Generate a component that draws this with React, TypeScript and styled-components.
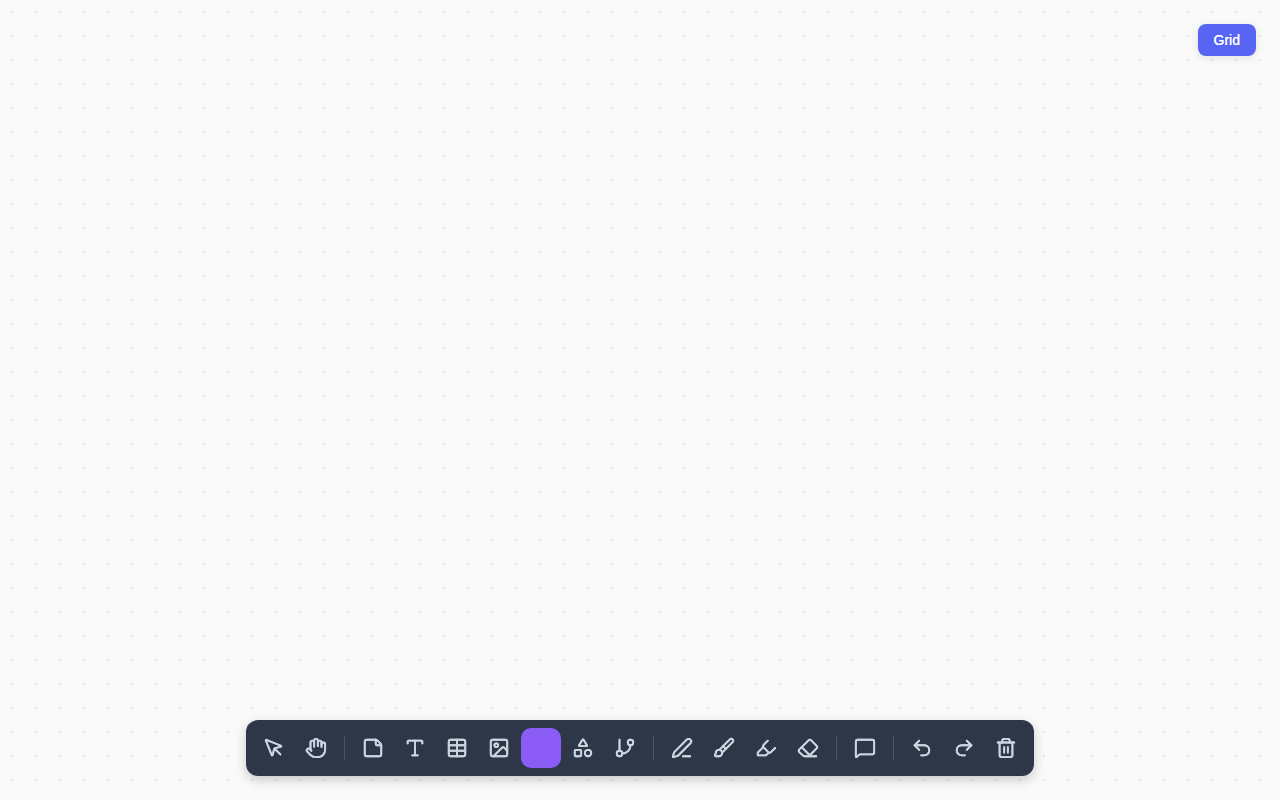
import React from 'react';
import styled, { createGlobalStyle } from 'styled-components';
import {
  Brush,
  Eraser,
  GitBranch,
  Hand,
  Highlighter,
  Image as ImageIcon,
  MessageSquare,
  MousePointer,
  PenLine,
  Redo2,
  Shapes,
  StickyNote,
  Table,
  Trash2,
  Type,
  Undo2,
  type LucideIcon,
} from 'lucide-react';

const GlobalStyle = createGlobalStyle`
  *, *::before, *::after { box-sizing: border-box; }
  body { margin: 0; overflow: hidden; font-family: "Liberation Sans", Arial, sans-serif; }
`;

const Board = styled.main`
  display: flex;
  flex-direction: column;
  justify-content: space-between;
  width: 100vw;
  height: 100vh;
  padding: 24px;
  background-color: #fafafa;
  background-image: radial-gradient(circle, #e5e5e5 1px, transparent 1px);
  background-size: 24px 24px;
`;

const GridToggle = styled.button`
  align-self: flex-end;
  height: 32px;
  padding: 0 16px;
  border: 0;
  border-radius: 8px;
  background: #5865f2;
  color: #fff;
  font: 500 14px "Liberation Sans", Arial, sans-serif;
  text-shadow: 0 0 0 #fff;
  box-shadow: 0 2px 8px rgba(0, 0, 0, 0.1);
`;

const Toolbar = styled.div`
  display: flex;
  align-items: center;
  align-self: center;
  gap: 2px;
  padding: 8px;
  border-radius: 12px;
  background: #2d3748;
  box-shadow: 0 4px 12px rgba(0, 0, 0, 0.2);
`;

const ToolButton = styled.button<{ $active?: boolean }>`
  display: flex;
  align-items: center;
  justify-content: center;
  width: 40px;
  height: 40px;
  padding: 0;
  border: 0;
  border-radius: ${(p) => (p.$active ? '10px' : '8px')};
  background: ${(p) => (p.$active ? '#8b5cf6' : 'transparent')};
  color: #cbd5e0;

  svg {
    filter: drop-shadow(0 0 0 currentColor);
  }
`;

const Divider = styled.span`
  width: 1px;
  height: 24px;
  margin: 0 6px;
  background: #4a5568;
`;

interface Tool {
  label: string;
  icon?: LucideIcon;
}

const groups: Tool[][] = [
  [
    { label: 'Select', icon: MousePointer },
    { label: 'Pan', icon: Hand },
  ],
  [
    { label: 'Note', icon: StickyNote },
    { label: 'Text', icon: Type },
    { label: 'Table', icon: Table },
    { label: 'Image', icon: ImageIcon },
    { label: 'Frame' },
    { label: 'Shapes', icon: Shapes },
    { label: 'Connector', icon: GitBranch },
  ],
  [
    { label: 'Pen', icon: PenLine },
    { label: 'Brush', icon: Brush },
    { label: 'Highlighter', icon: Highlighter },
    { label: 'Eraser', icon: Eraser },
  ],
  [{ label: 'Comment', icon: MessageSquare }],
  [
    { label: 'Undo', icon: Undo2 },
    { label: 'Redo', icon: Redo2 },
    { label: 'Delete', icon: Trash2 },
  ],
];

export default function App() {
  return (
    <>
      <GlobalStyle />
      <Board>
        <GridToggle>Grid</GridToggle>
        <Toolbar role="toolbar">
          {groups.map((tools, i) => (
            <React.Fragment key={i}>
              {i > 0 && <Divider />}
              {tools.map(({ label, icon: Icon }) => (
                <ToolButton key={label} aria-label={label} $active={!Icon}>
                  {Icon && <Icon size={22} strokeWidth={2} />}
                </ToolButton>
              ))}
            </React.Fragment>
          ))}
        </Toolbar>
      </Board>
    </>
  );
}
